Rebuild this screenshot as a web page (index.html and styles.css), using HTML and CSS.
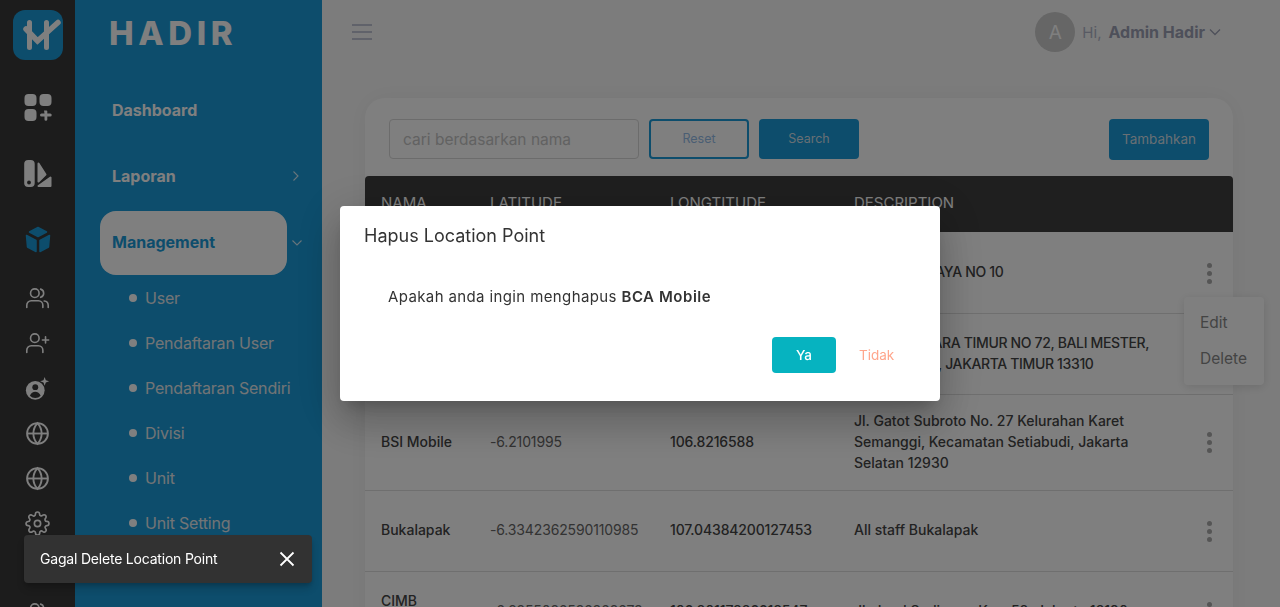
FILE: index.html
```html
<!DOCTYPE html>
<html lang="id">
<head>
<meta charset="utf-8">
<title>Hadir - Location Point</title>
<link rel="stylesheet" href="styles.css">
</head>
<body>
<div class="app">
  <aside class="rail">
    <div class="rail-logo">
      <svg class="logo-mark" viewBox="0 0 50 50"><rect width="50" height="50" rx="12" fill="#1a9ad8"/><path d="M16.500 12.500v25M33.500 12.500v25" stroke="#fff" stroke-width="5" stroke-linecap="round" fill="none"/><path d="M13 19l11.500 12L45 12.500" stroke="#fff" stroke-width="5.500" stroke-linecap="round" stroke-linejoin="miter" fill="none"/></svg>
    </div>
    <div class="rail-tall"><svg class="ico" viewBox="0 0 28 28" fill="#fff"><rect x="0.500" y="0" width="12" height="12" rx="4"/><rect x="15.500" y="0" width="12" height="12" rx="4"/><rect x="0.500" y="15" width="12" height="12" rx="4"/><path d="M20 16.500h2.500a.8.8 0 0 1 .8.8v2.200h2.900a1.300 1.300 0 0 1 0 3h-2.900v2.900a1.400 1.400 0 0 1-2.800 0v-2.900h-3a1.500 1.500 0 0 1 0-3h3z"/></svg></div>
    <div class="rail-tall"><svg class="ico" viewBox="0 0 28 28"><rect x="0.200" y="0" width="10.500" height="27" rx="4" fill="#fff"/><path fill="#fff" stroke="#fff" stroke-width="2" stroke-linejoin="round" d="M14.500 3.500l7 11-7 7z"/><path fill="#fff" stroke="#fff" stroke-width="2" stroke-linejoin="round" d="M26.500 17.500V26H14.500z"/><circle cx="5" cy="22.500" r="1.900" fill="#383838"/></svg></div>
    <div class="rail-tall"><svg class="ico" viewBox="0 0 28 28" fill="#1a9ad8" stroke="#1a9ad8" stroke-width="1.500" stroke-linejoin="round"><path d="M14 1.500l8.500 4.500-8.500 4.500L5.500 6z"/><path d="M2.500 9.500l9.500 5v11l-8.500-4.500z"/><path d="M25.500 9.500l-9.500 5v11l8.500-4.500z"/></svg></div>
    <div class="rail-group">
      <div class="rail-item"><svg class="ico" viewBox="0 0 28 28" fill="none" stroke="#fff" stroke-width="1.800" stroke-linecap="round"><circle cx="11" cy="8" r="4.800"/><path d="M2 24v-2.500a5 5 0 0 1 5-5h8a5 5 0 0 1 5 5V24"/><path d="M17.500 3.500a4.800 4.800 0 0 1 0 9.200"/><path d="M21.500 16.800a5 5 0 0 1 4.500 5V24"/></svg></div>
      <div class="rail-item"><svg class="ico" viewBox="0 0 28 28" fill="none" stroke="#fff" stroke-width="1.800" stroke-linecap="round"><circle cx="11" cy="8" r="4.800"/><path d="M2 24v-2.500a5 5 0 0 1 5-5h8a5 5 0 0 1 5 5V24"/><path d="M23 6.500v7M19.500 10h7"/></svg></div>
      <div class="rail-item"><svg class="ico" viewBox="0 0 28 28"><circle cx="11.500" cy="16" r="10.500" fill="#fff"/><circle cx="11.500" cy="12.500" r="3.300" fill="#383838"/><path d="M5.500 22c1-3 3.500-4.500 6-4.500s5 1.500 6 4.500a8 8 0 0 1-12 0z" fill="#383838"/><path d="M22 1l1.300 3.700L27 6l-3.700 1.300L22 11l-1.300-3.700L17 6l3.700-1.300z" fill="#fff"/></svg></div>
      <div class="rail-item"><svg class="ico" viewBox="0 0 24 24" fill="none" stroke="#fff" stroke-width="1.800"><circle cx="12" cy="12" r="10"/><path d="M2 12h20"/><path d="M12 2a15.300 15.300 0 0 1 4 10 15.300 15.300 0 0 1-4 10 15.300 15.300 0 0 1-4-10 15.300 15.300 0 0 1 4-10z"/></svg></div>
      <div class="rail-item"><svg class="ico" viewBox="0 0 24 24" fill="none" stroke="#fff" stroke-width="1.800"><circle cx="12" cy="12" r="10"/><path d="M2 12h20"/><path d="M12 2a15.300 15.300 0 0 1 4 10 15.300 15.300 0 0 1-4 10 15.300 15.300 0 0 1-4-10 15.300 15.300 0 0 1 4-10z"/></svg></div>
      <div class="rail-item"><svg class="ico" viewBox="0 0 24 24" fill="none" stroke="#fff" stroke-width="1.600"><circle cx="12" cy="12" r="3"/><path d="M19.400 15a1.650 1.650 0 0 0 .33 1.820l.06.06a2 2 0 0 1 0 2.830 2 2 0 0 1-2.830 0l-.06-.06a1.650 1.650 0 0 0-1.820-.33 1.650 1.650 0 0 0-1 1.510V21a2 2 0 0 1-2 2 2 2 0 0 1-2-2v-.09A1.650 1.650 0 0 0 9 19.400a1.650 1.650 0 0 0-1.820.33l-.06.06a2 2 0 0 1-2.830 0 2 2 0 0 1 0-2.830l.06-.06a1.650 1.650 0 0 0 .33-1.820 1.650 1.650 0 0 0-1.510-1H3a2 2 0 0 1-2-2 2 2 0 0 1 2-2h.09A1.650 1.650 0 0 0 4.600 9a1.650 1.650 0 0 0-.33-1.820l-.06-.06a2 2 0 0 1 0-2.830 2 2 0 0 1 2.830 0l.06.06a1.650 1.650 0 0 0 1.820.33H9a1.650 1.650 0 0 0 1-1.510V3a2 2 0 0 1 2-2 2 2 0 0 1 2 2v.09a1.650 1.650 0 0 0 1 1.510 1.650 1.650 0 0 0 1.820-.33l.06-.06a2 2 0 0 1 2.830 0 2 2 0 0 1 0 2.830l-.06.06a1.650 1.650 0 0 0-.33 1.820V9a1.650 1.650 0 0 0 1.510 1H21a2 2 0 0 1 2 2 2 2 0 0 1-2 2h-.09a1.650 1.650 0 0 0-1.510 1z"/></svg></div>
      <div class="rail-item"></div>
      <div class="rail-item"><svg class="ico" viewBox="0 0 28 28" fill="none" stroke="#fff" stroke-width="1.800" stroke-linecap="round"><circle cx="11" cy="8" r="4.800"/><path d="M2 24v-2.500a5 5 0 0 1 5-5h8a5 5 0 0 1 5 5V24"/><path d="M17.500 3.500a4.800 4.800 0 0 1 0 9.200"/></svg></div>
    </div>
  </aside>

  <nav class="side">
    <div class="brand">HADIR</div>
    <div class="nav-item">Dashboard</div>
    <div class="nav-item">Laporan<svg class="nav-chev" viewBox="0 0 12 12" fill="none" stroke="#fff" stroke-opacity=".8" stroke-width="1.100"><path d="M3.500 1.500l4.500 4.500-4.500 4.500"/></svg></div>
    <div class="nav-active-row">
      <div class="nav-pill">Management</div>
      <svg class="nav-chev-down" viewBox="0 0 12 12" fill="none" stroke="#fff" stroke-opacity=".8" stroke-width="1.100"><path d="M1.500 3.500l4.500 4.500 4.500-4.500"/></svg>
    </div>
    <ul class="subnav">
      <li>User</li>
      <li>Pendaftaran User</li>
      <li>Pendaftaran Sendiri</li>
      <li>Divisi</li>
      <li>Unit</li>
      <li>Unit Setting</li>
    </ul>
  </nav>

  <main class="main">
    <header class="topbar">
      <button class="burger" aria-label="menu"><span></span><span></span><span></span></button>
      <div class="user">
        <div class="avatar">A</div>
        <span class="hi">Hi,</span>
        <strong class="uname">Admin Hadir</strong>
        <svg class="user-chev" viewBox="0 0 12 8" fill="none" stroke="#9ca0b4" stroke-width="1.300"><path d="M1 1.500l5 5 5-5"/></svg>
      </div>
    </header>

    <section class="card">
      <div class="toolbar">
        <input class="search" type="text" placeholder="cari berdasarkan nama">
        <button class="btn btn-outline">Reset</button>
        <button class="btn btn-solid">Search</button>
        <button class="btn btn-solid btn-add">Tambahkan</button>
      </div>
      <table class="tbl">
        <thead>
          <tr><th class="c1">NAMA</th><th class="c2">LATITUDE</th><th class="c3">LONGTITUDE</th><th class="c4">DESCRIPTION</th><th class="c5"></th></tr>
        </thead>
        <tbody>
          <tr><td class="strong">BCA Mobile</td><td class="num">-6.2008</td><td class="strong num">106.8456</td><td class="strong caps">JL. KEBON RAYA NO 10</td><td class="kebab-cell"><span class="kebab"><i></i><i></i><i></i></span></td></tr>
          <tr><td class="strong">BCA Syariah</td><td class="num">-6.2182</td><td class="strong num">106.8655</td><td class="strong caps">JL. JATINEGARA TIMUR NO 72, BALI MESTER, JATINEGARA, JAKARTA TIMUR 13310</td><td class="kebab-cell"><span class="kebab"><i></i><i></i><i></i></span></td></tr>
          <tr><td class="strong">BSI Mobile</td><td class="num">-6.2101995</td><td class="strong num">106.8216588</td><td class="strong">Jl. Gatot Subroto No. 27 Kelurahan Karet Semanggi, Kecamatan Setiabudi, Jakarta Selatan 12930</td><td class="kebab-cell"><span class="kebab"><i></i><i></i><i></i></span></td></tr>
          <tr><td class="strong">Bukalapak</td><td class="num">-6.3342362590110985</td><td class="strong num">107.04384200127453</td><td class="strong">All staff Bukalapak</td><td class="kebab-cell"><span class="kebab"><i></i><i></i><i></i></span></td></tr>
          <tr><td class="strong">CIMB<br>Niaga</td><td class="num">-6.2255026526362673</td><td class="strong num">106.80117826618547</td><td class="strong">Jl. Jend Sudirman Kav. 58, Jakarta 12190</td><td class="kebab-cell"><span class="kebab"><i></i><i></i><i></i></span></td></tr>
        </tbody>
      </table>
    </section>

    <div class="row-menu">
      <div class="row-menu-item">Edit</div>
      <div class="row-menu-item">Delete</div>
    </div>
  </main>
</div>

<div class="overlay">
  <div class="dialog">
    <h2 class="dialog-title">Hapus Location Point</h2>
    <p class="dialog-body">Apakah anda ingin menghapus <strong>BCA Mobile</strong></p>
    <div class="dialog-actions">
      <button class="dlg-yes">Ya</button>
      <button class="dlg-no">Tidak</button>
    </div>
  </div>
</div>

<div class="toast">
  <span class="toast-text">Gagal Delete Location Point</span>
  <svg class="toast-x" viewBox="0 0 16 16" fill="none" stroke="#fff" stroke-width="1.800"><path d="M1.500 1.500l13 13M14.500 1.500l-13 13"/></svg>
</div>
</body>
</html>
```

FILE: styles.css
```css
* { box-sizing: border-box; }
html, body { margin: 0; height: 100%; overflow: hidden; }
body { font-family: "Inter", "Liberation Sans", sans-serif; color: #444; background: #fff; }
button { font: inherit; cursor: pointer; }

.app { display: flex; height: 607px; overflow: hidden; }

/* icon rail */
.rail { width: 75px; flex: none; background: #383838; display: flex; flex-direction: column; align-items: center; }
.rail-logo { height: 75px; flex: none; padding-top: 10px; }
.logo-mark { display: block; width: 50px; height: 50px; }
.rail-tall { height: 66px; flex: none; display: flex; align-items: center; justify-content: center; }
.rail-group { padding-top: 3px; flex: none; }
.rail-item { height: 45px; display: flex; align-items: center; justify-content: center; }
.ico { width: 28px; height: 28px; display: block; }
.rail-item .ico { width: 25px; height: 25px; }

/* sidebar */
.side { width: 247px; flex: none; background: #1a9ad8; color: #fff; }
.brand { height: 77px; padding: 13px 0 0 34px; font-size: 33px; line-height: 40px; font-weight: 800; letter-spacing: 4.600px; }
.nav-item { height: 66px; display: flex; align-items: center; justify-content: space-between; padding: 0 20px 0 37px; font-size: 16px; font-weight: 700; }
.nav-chev { width: 12px; height: 12px; }
.nav-active-row { display: flex; align-items: center; margin: 2px 0 1px 25px; }
.nav-pill { width: 187px; height: 64px; background: #fff; border-radius: 16px; color: #1a9ad8; font-size: 16px; font-weight: 700; display: flex; align-items: center; padding: 0 0 2px 12px; }
.nav-chev-down { width: 12px; height: 12px; margin-left: 4px; }
.subnav { list-style: none; margin: 0; padding: 0 0 0 54px; }
.subnav li { height: 45px; padding-bottom: 2px; display: flex; align-items: center; gap: 8px; font-size: 16px; letter-spacing: -0.2px; color: #e4e9ec; }
.subnav li::before { content: ""; width: 8px; height: 8px; border-radius: 50%; background: #fff; }

/* main */
.main { flex: 1; position: relative; padding: 0 47px 0 30px; background: #f9f9f9; min-width: 0; }
.topbar { height: 64px; display: flex; align-items: center; justify-content: space-between; }
.burger { width: 20px; height: 16px; padding: 0; border: 0; background: none; display: flex; flex-direction: column; justify-content: space-between; }
.burger span { display: block; height: 2px; background: #c0c4d4; }
.user { display: flex; align-items: center; margin-right: 12px; }
.avatar { width: 40px; height: 40px; border-radius: 50%; background: #ccc; color: #fff; font-size: 19px; display: flex; align-items: center; justify-content: center; margin-right: 7px; }
.hi { font-size: 15px; color: #b0b4c8; margin-right: 7px; }
.uname { font-size: 16px; font-weight: 700; color: #9ca0b4; }
.user-chev { width: 12px; height: 8px; margin-left: 4px; }

.card { margin: 34px 0 0 13px; background: #fff; border-radius: 20px 20px 0 0; box-shadow: 0 0 24px rgba(0,0,0,.05); height: 600px; }
.toolbar { display: flex; align-items: flex-start; gap: 10px; padding: 21px 24px 0; height: 78px; }
.search { width: 250px; height: 40px; border: 1px solid #d8d8d8; border-radius: 4px; padding: 0 13px; font: inherit; font-size: 15.500px; background: #fff; }
.search::placeholder { color: #c4c4c4; }
.btn { width: 100px; height: 40px; border-radius: 4px; font-size: 12.500px; padding: 0 0 2px; }
.btn-outline { background: #fff; border: 2px solid #1a9ad8; color: #94bce8; }
.btn-solid { background: #1a9ad8; border: 0; color: #d0dfe8; }
.btn-add { margin-left: auto; height: 41px; font-size: 13.500px; }

.tbl { width: 100%; border-collapse: collapse; table-layout: fixed; font-size: 14px; line-height: 21px; }
.tbl th { background: #3e3e3e; color: #fff; font-size: 15px; font-weight: 400; text-align: left; height: 56px; padding: 0 0 4px 16px; white-space: nowrap; }
.tbl th:first-child { border-top-left-radius: 4px; }
.tbl th:last-child { border-top-right-radius: 4px; }
.c1 { width: 109px; } .c2 { width: 180px; } .c3 { width: 184px; } .c4 { width: 340px; } .c5 { width: 55px; }
.tbl td { padding: 15px 0 17px 16px; height: 81px; border-bottom: 1px solid #dedede; color: #666; vertical-align: middle; }
.tbl td.strong { color: #444; font-weight: 500; }
.tbl td.num { letter-spacing: -0.15px; }
.tbl td.caps { letter-spacing: -0.35px; }
.tbl td.kebab-cell { padding: 0; text-align: center; }
.kebab { display: inline-flex; flex-direction: column; gap: 3px; vertical-align: middle; margin-left: 7px; }
.kebab i { width: 5px; height: 5px; border-radius: 50%; background: #aaa; display: block; }

.row-menu { position: absolute; top: 297px; left: 862px; width: 80px; height: 88px; background: #fff; border-radius: 4px; box-shadow: 0 2px 10px rgba(0,0,0,.12); padding: 7px 0 0 16px; font-size: 15.500px; color: #888; }
.row-menu-item { height: 36px; display: flex; align-items: center; }

/* dialog */
.overlay { position: fixed; inset: 0; background: rgba(0,0,0,.5); display: flex; align-items: center; justify-content: center; }
.dialog { width: 600px; height: 195px; background: #fff; border-radius: 4px; padding: 17px 24px 16px; box-shadow: 0 11px 15px -7px rgba(0,0,0,.2), 0 24px 38px 3px rgba(0,0,0,.14), 0 9px 46px 8px rgba(0,0,0,.12); color: #333; }
.dialog-title { margin: 0; font-size: 18px; line-height: 26px; font-weight: 400; }
.dialog-body { margin: 37px 0 0 24px; font-size: 15px; line-height: 22px; letter-spacing: .38px; }
.dialog-body strong { font-weight: 600; letter-spacing: .55px; }
.dialog-actions { display: flex; justify-content: flex-end; margin-top: 29px; padding-right: 23px; }
.dlg-yes { width: 64px; height: 36px; border: 0; border-radius: 4px; background: #06b3c0; color: #fff; font-size: 13.500px; font-weight: 500; padding: 0; }
.dlg-no { border: 0; background: none; color: #ffa68c; font-size: 13.500px; padding: 0; margin-left: 23px; width: 34px; }

/* toast */
.toast { position: fixed; left: 24px; top: 535px; width: 288px; height: 48px; background: #323232; border-radius: 4px; color: #fff; font-size: 14px; letter-spacing: -0.2px; display: flex; align-items: center; justify-content: space-between; padding: 0 17px 0 16px; box-shadow: 0 3px 5px -1px rgba(0,0,0,.2), 0 6px 10px 0 rgba(0,0,0,.14); }
.toast-text { padding-bottom: 2px; }
.toast-x { width: 16px; height: 16px; }
```
